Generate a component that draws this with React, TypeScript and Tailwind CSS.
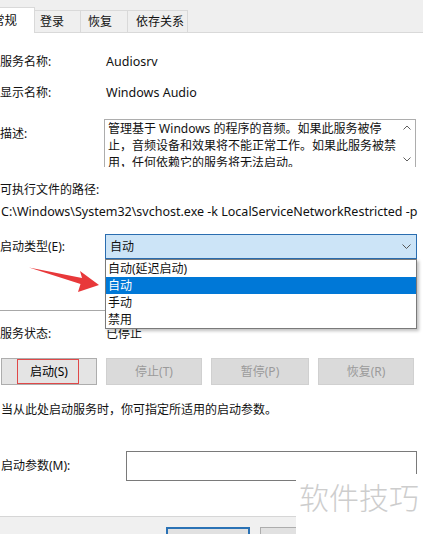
const TABS = [
  { label: "登录", w: "w-[46px]", pl: "pl-[5px]" },
  { label: "恢复", w: "w-[47px]", pl: "pl-[7px]" },
  { label: "依存关系", w: "w-[60px]", pl: "pl-[8px]" },
];

const OPTIONS = ["自动(延迟启动)", "自动", "手动", "禁用"];

function Tabs() {
  return (
    <div className="flex h-[33px] items-end border-b border-[#d9d9d9] bg-[#efefef]">
      <div className="mb-[-1px] ml-[-16px] h-[26px] w-[51px] border-r border-t border-[#d9d9d9] bg-white pl-[8px] pt-[6px] text-[12.5px] leading-[14px]">
        常规
      </div>
      {TABS.map((t) => (
        <div
          key={t.label}
          className={`h-[22px] ${t.w} ${t.pl} border-r border-t border-[#d9d9d9] pt-[4px] leading-[14px]`}
        >
          {t.label}
        </div>
      ))}
    </div>
  );
}

function Chevron({ up = false }: { up?: boolean }) {
  return (
    <svg width="8" height="5" viewBox="0 0 8 5" className="block">
      <path
        d={up ? "M0.5 4.5 L4 1 L7.5 4.5" : "M0.5 0.5 L4 4 L7.5 0.5"}
        fill="none"
        stroke="#606060"
        strokeWidth="1"
      />
    </svg>
  );
}

function Button({
  label,
  enabled = false,
  marked = false,
  w,
}: {
  label: string;
  enabled?: boolean;
  marked?: boolean;
  w: string;
}) {
  return (
    <div
      className={`relative flex h-[27px] ${w} items-center justify-center border ${
        enabled
          ? "border-[#adadad] bg-[#e4e4e4] text-black"
          : "border-[#d0d0d0] bg-[#dadada] text-[#9a9a9a]"
      }`}
    >
      {label}
      {marked && (
        <div className="absolute left-[15px] top-0 h-[25px] w-[62px] border border-[#e04848]" />
      )}
    </div>
  );
}

export default function App() {
  return (
    <div className="relative h-[534px] w-[423px] overflow-hidden bg-white font-['Noto_Sans','Noto_Sans_CJK_SC',sans-serif] text-[12px] text-[#111]">
      <Tabs />

      <div className="flex flex-col">
        <div className="mt-[19px] flex h-[20px] items-center">
          <span className="w-[106px]">服务名称:</span>
          <span className="text-[12.5px]">Audiosrv</span>
        </div>
        <div className="mt-[11px] flex h-[20px] items-center">
          <span className="w-[106px]">显示名称:</span>
          <span className="text-[12.5px]">Windows Audio</span>
        </div>

        <div className="mt-[16px] flex items-start">
          <span className="mt-[5px] w-[104px] leading-[20px]">描述:</span>
          <div className="flex h-[48px] w-[312px] overflow-hidden border border-b-0 border-[#adadad]">
            <div className="flex-1 pl-[3px] leading-[17px]">
              管理基于 Windows 的程序的音频。如果此服务被停止，音频设备和效果将不能正常工作。如果此服务被禁用，任何依赖它的服务将无法启动。
            </div>
            <div className="flex w-[16px] flex-col items-center justify-between py-[5px]">
              <Chevron up />
              <Chevron />
            </div>
          </div>
        </div>

        <div className="mt-[13px] flex h-[20px] items-center">可执行文件的路径:</div>
        <div className="mt-[2px] flex h-[20px] items-center pl-[1px] text-[12.5px]">
          C:\Windows\System32\svchost.exe -k LocalServiceNetworkRestricted -p
        </div>

        <div className="mt-[12px] flex items-center">
          <span className="w-[105px]">启动类型(E):</span>
          <div className="flex h-[25px] w-[312px] items-center justify-between border border-[#2a6db0] bg-[#cce4f7] pl-[4px] pr-[5px]">
            <span>自动</span>
            <svg width="9" height="5" viewBox="0 0 9 5">
              <path d="M0.5 0.5 L4.5 4.5 L8.5 0.5" fill="none" stroke="#555" strokeWidth="1" />
            </svg>
          </div>
        </div>

        <div className="mt-[51px] h-px w-[416px] bg-[#a8a8a8]" />

        <div className="mt-[13px] flex h-[20px] items-center">
          <span className="w-[106px]">服务状态:</span>
          <span>已停止</span>
        </div>

        <div className="mt-[14px] flex gap-[9px] pl-[1px]">
          <Button label="启动(S)" enabled marked w="w-[96px]" />
          <Button label="停止(T)" w="w-[96px]" />
          <Button label="暂停(P)" w="w-[98px]" />
          <Button label="恢复(R)" w="w-[96px]" />
        </div>

        <div className="mt-[15px] flex h-[20px] items-center pl-[1px]">
          当从此处启动服务时，你可指定所适用的启动参数。
        </div>

        <div className="mt-[31px] flex items-center">
          <span className="w-[126px] pl-[1px]">启动参数(M):</span>
          <div className="h-[30px] w-[291px] border border-[#7a7a7a] bg-white" />
        </div>

        <div className="mt-[35px] h-[40px] border-t border-[#d6d6d6] bg-[#f0f0f0] pl-[166px] pt-[10px]">
          <div className="flex gap-[10px]">
            <div className="h-[30px] w-[84px] border-2 border-[#2a72b5] bg-[#e1e1e1]" />
            <div className="h-[30px] w-[84px] border border-[#adadad] bg-[#e1e1e1]" />
          </div>
        </div>
      </div>

      {/* dropdown list */}
      <div className="absolute left-[105px] top-[259px] w-[312px] border border-[#7a7a7a] bg-white shadow-[2px_2px_3px_rgba(0,0,0,0.25)]">
        {OPTIONS.map((o, i) => (
          <div
            key={o}
            className={`flex h-[17px] items-center pl-[2px] ${
              i === 1 ? "bg-[#0078d7] text-white" : ""
            }`}
          >
            {o}
          </div>
        ))}
      </div>

      {/* red arrow */}
      <svg
        className="absolute left-0 top-0"
        width="423"
        height="534"
        viewBox="0 0 423 534"
      >
        <path
          d="M29 267.5 L82 278 L80 271 L99 285 L78 292 L80.5 284 Z"
          fill="#e8383a"
        />
      </svg>

      {/* watermark */}
      <div className="absolute left-[296px] top-[474px] h-[60px] w-[127px] bg-white pl-[3px] pt-[6px]">
        <span className="text-[30px] font-light leading-[36px] text-[#cdcdcd]">
          软件技巧
        </span>
      </div>
    </div>
  );
}
